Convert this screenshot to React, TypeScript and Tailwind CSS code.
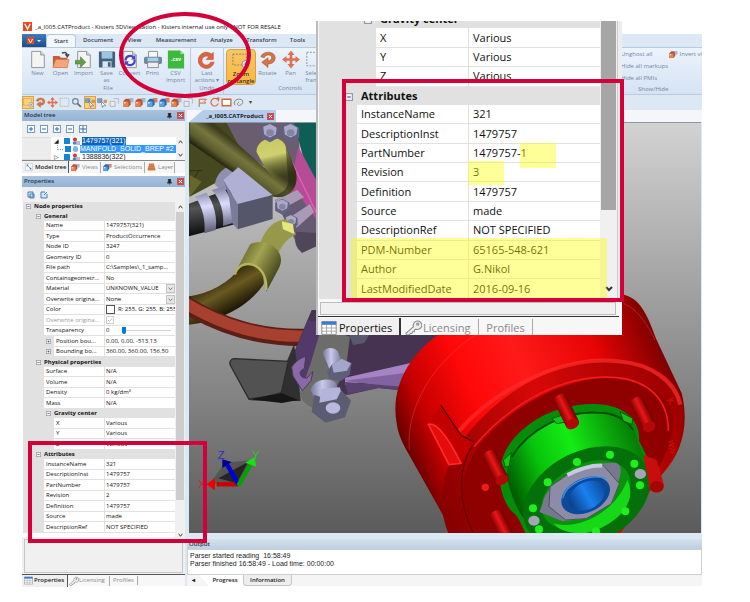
import type { ReactNode } from 'react'
import clsx from 'clsx'

type Row = {
  label: string
  value?: ReactNode
  kind?: 'head' | 'expand'
  depth: number
  muted?: boolean
}

const ribbonTabs = [
  { name: 'Document', width: 'w-[44px]' },
  { name: 'View', width: 'w-[29px]' },
  { name: 'Measurement', width: 'w-[54px]' },
  { name: 'Analyze', width: 'w-[37px]' },
  { name: 'Transform', width: 'w-[43px]' },
  { name: 'Tools', width: 'w-[29px]' },
]

const nodeRows: Row[] = [
  { label: 'Node properties', kind: 'head', depth: 0 },
  { label: 'General', kind: 'head', depth: 1 },
  { label: 'Name', value: '1479757(321)', depth: 1 },
  { label: 'Type', value: 'ProductOccurrence', depth: 1 },
  { label: 'Node ID', value: '3247', depth: 1 },
  { label: 'Geometry ID', value: '0', depth: 1 },
  { label: 'File path', value: 'C:\\Samples\\_1_samp...', depth: 1 },
  { label: 'Containsgeometr...', value: 'No', depth: 1 },
  { label: 'Material', value: <Picker label="Material" value="UNKNOWN_VALUE" />, depth: 1 },
  { label: 'Overwrite origina...', value: <Picker label="Overwrite original material" value="None" />, depth: 1 },
  {
    label: 'Color',
    value: (
      <span className="flex items-center gap-[3px]">
        <span className="h-[9px] w-[9px] shrink-0 border border-[#555] bg-white" />
        R: 255, G: 255, B: 255
      </span>
    ),
    depth: 1,
  },
  {
    label: 'Overwrite origina...',
    value: (
      <span className="relative block h-[8px] w-[8px]">
        <input type="checkbox" defaultChecked disabled aria-label="Overwrite original color" className="block h-[8px] w-[8px] appearance-none border border-[#ccc] bg-white" />
        <svg viewBox="0 0 8 8" className="absolute inset-0 h-[8px] w-[8px]">
          <path d="M2 4l1.500 1.500L6 2.500" fill="none" stroke="#bbb" />
        </svg>
      </span>
    ),
    depth: 1,
    muted: true,
  },
  {
    label: 'Transparency',
    value: (
      <span className="flex items-center gap-[13px]">
        0
        <input
          type="range"
          defaultValue={0}
          aria-label="Transparency"
          className="h-[8px] w-[49px] appearance-none bg-[linear-gradient(#d4d4d4,#d4d4d4)] bg-[length:100%_1px] bg-center bg-no-repeat [&::-webkit-slider-thumb]:h-[7px] [&::-webkit-slider-thumb]:w-[4px] [&::-webkit-slider-thumb]:appearance-none [&::-webkit-slider-thumb]:rounded-b-sm [&::-webkit-slider-thumb]:bg-[#0078d7]"
        />
      </span>
    ),
    depth: 1,
  },
  { label: 'Position bou...', value: '0.00, 0.00, -513.13', kind: 'expand', depth: 2 },
  { label: 'Bounding bo...', value: '360.00, 360.00, 156.50', kind: 'expand', depth: 2 },
  { label: 'Physical properties', kind: 'head', depth: 1 },
  { label: 'Surface', value: 'N/A', depth: 1 },
  { label: 'Volume', value: 'N/A', depth: 1 },
  { label: 'Density', value: '0 kg/dm³', depth: 1 },
  { label: 'Mass', value: 'N/A', depth: 1 },
  { label: 'Gravity center', kind: 'head', depth: 2 },
  { label: 'X', value: 'Various', depth: 2 },
  { label: 'Y', value: 'Various', depth: 2 },
  { label: 'Z', value: 'Various', depth: 2 },
  { label: 'Attributes', kind: 'head', depth: 1 },
  { label: 'InstanceName', value: '321', depth: 1 },
  { label: 'DescriptionInst', value: '1479757', depth: 1 },
  { label: 'PartNumber', value: '1479757', depth: 1 },
  { label: 'Revision', value: '2', depth: 1 },
  { label: 'Definition', value: '1479757', depth: 1 },
  { label: 'Source', value: 'made', depth: 1 },
  { label: 'DescriptionRef', value: 'NOT SPECIFIED', depth: 1 },
]

const detailRows: Row[] = [
  { label: 'Gravity center', kind: 'head', depth: 2 },
  { label: 'X', value: 'Various', depth: 2 },
  { label: 'Y', value: 'Various', depth: 2 },
  { label: 'Z', value: 'Various', depth: 2 },
  { label: 'Attributes', kind: 'head', depth: 1 },
  { label: 'InstanceName', value: '321', depth: 1 },
  { label: 'DescriptionInst', value: '1479757', depth: 1 },
  { label: 'PartNumber', value: '1479757-1', depth: 1 },
  { label: 'Revision', value: '3', depth: 1 },
  { label: 'Definition', value: '1479757', depth: 1 },
  { label: 'Source', value: 'made', depth: 1 },
  { label: 'DescriptionRef', value: 'NOT SPECIFIED', depth: 1 },
  { label: 'PDM-Number', value: '65165-548-621', depth: 1 },
  { label: 'Author', value: 'G.Nikol', depth: 1 },
  { label: 'LastModifiedDate', value: '2016-09-16', depth: 1 },
]

const smallIndent = ['border-l-[11px]', 'border-l-[21px]', 'border-l-[31px]']
const smallHeadPad = ['pl-[3px]', 'pl-[13px]', 'pl-[23px]']
const largeIndent = ['border-l-[19px]', 'border-l-[38px]', 'border-l-[57px]']
const largeHeadPad = ['pl-[7px]', 'pl-[26px]', 'pl-[45px]']

function Picker({ label, value }: { label: string; value: string }) {
  return (
    <span className="flex items-center">
      <select aria-label={label} className="h-[9px] min-w-0 flex-1 appearance-none bg-transparent p-0 leading-[9px]">
        <option>{value}</option>
      </select>
      <svg viewBox="0 0 9 9" className="h-[9px] w-[9px] shrink-0 border border-[#c4c4c4] bg-[#e6e6e6]">
        <path d="M2 3.500l2.500 2.500L7 3.500" fill="none" stroke="#555" />
      </svg>
    </span>
  )
}

function Expander({ plus, large }: { plus?: boolean; large?: boolean }) {
  return (
    <svg viewBox="0 0 7 7" className={large ? 'mr-[8px] inline h-[8px] w-[8px]' : 'mr-[3px] inline h-[5px] w-[5px]'}>
      <rect x=".5" y=".5" width="6" height="6" fill="#f4f4f4" stroke="#9a9a9a" />
      <path d={plus ? 'M2 3.500h3M3.500 2v3' : 'M2 3.500h3'} stroke="#3b5aa0" />
    </svg>
  )
}

function PropertyTable({ rows, large }: { rows: Row[]; large?: boolean }) {
  const indent = large ? largeIndent : smallIndent
  const headPad = large ? largeHeadPad : smallHeadPad
  return (
    <table
      className={clsx(
        'w-full table-fixed border-separate border-spacing-0 text-left text-[#111]',
        large ? '-mt-[11px] h-[289px] text-[11px] leading-[18px]' : 'h-[331px] text-[6px] leading-[9px]',
      )}
    >
      <colgroup>
        <col className={large ? 'w-[149px]' : 'w-[81px]'} />
        <col />
      </colgroup>
      <tbody>
        {rows.map((row, i) =>
          row.kind === 'head' ? (
            <tr key={i}>
              <th colSpan={2} className={clsx('truncate bg-[#e1e1e1] py-0 pr-0 font-bold', headPad[row.depth])}>
                <Expander large={large} />
                {row.label}
              </th>
            </tr>
          ) : (
            <tr key={i} className={row.muted ? 'text-[#9a9a9a]' : undefined}>
              <th className={clsx('border-b border-[#e1e1e1] bg-white p-0 font-normal whitespace-nowrap', indent[row.depth])}>
                {row.kind === 'expand' && (
                  <span className="-ml-[8px]">
                    <Expander plus />
                  </span>
                )}
                <span className={row.kind === 'expand' ? 'pl-[2px]' : large ? 'pl-[4px]' : 'pl-[2px]'}>{row.label}</span>
              </th>
              <td
                className={clsx(
                  'overflow-hidden border-b border-l border-[#e1e1e1] bg-white py-0 pr-0 whitespace-nowrap',
                  large ? 'pl-[4px]' : 'pl-[1px]',
                )}
              >
                {row.value}
              </td>
            </tr>
          ),
        )}
      </tbody>
    </table>
  )
}

/* ---------- icons ---------- */

function Sheet({ children }: { children?: ReactNode }) {
  return (
    <>
      <path d="M3 1h10l4 4v14H3z" fill="#f4f4f2" stroke="#8c8c8c" />
      <path d="M13 1v4h4" fill="#ddd" stroke="#8c8c8c" />
      {children}
    </>
  )
}

const icons: Record<string, ReactNode> = {
  new: <Sheet />,
  open: (
    <>
      <path d="M1 6h7l2 2h7v11H1z" fill="#c45f38" />
      <path d="M4 10h15l-2 9H1z" fill="#f3a67c" stroke="#d0683f" strokeWidth=".6" />
      <path d="M11 3c4-2 6 0 6 3m-2-2l2 3 2-3" fill="none" stroke="#444" strokeWidth="1.500" />
    </>
  ),
  import: (
    <Sheet>
      <path d="M0 11h6V7l6 6-6 6v-4H0z" fill="#5fa04b" stroke="#3d7a31" strokeWidth=".6" />
    </Sheet>
  ),
  save: (
    <>
      <path d="M1 1h17l1 1v17H1z" fill="#41617f" />
      <path d="M4 1h12v8H4z" fill="#9fc4e0" />
      <path d="M5 12h10v7H5z" fill="#dfe6ec" />
      <path d="M11 13h3v5h-3z" fill="#41617f" />
    </>
  ),
  convert: (
    <Sheet>
      <path d="M5 11a5 5 0 0 1 9-3M15 10a5 5 0 0 1-9 4" fill="none" stroke="#4545cf" strokeWidth="2.400" />
      <path d="M16 5v5h-5zM4 17v-5h5z" fill="#4545cf" />
    </Sheet>
  ),
  print: (
    <>
      <path d="M5 1h10v8H5z" fill="#f7f7f7" stroke="#888" />
      <rect x="0" y="7" width="20" height="8" rx="2" fill="#71879b" />
      <path d="M4 8h12v4H4z" fill="#a5d0ef" />
      <path d="M4 13h12v6H4z" fill="#eee" stroke="#888" />
    </>
  ),
  csv: (
    <>
      <path d="M1 0h14l4 4v16H1z" fill="#3fb83e" />
      <path d="M15 0v4h4z" fill="#a7e0a4" />
      <text x="10" y="12" textAnchor="middle" fontSize="6" fontWeight="bold" fill="#fff">.csv</text>
    </>
  ),
  last: <path d="M17 2v8H9l3-3a5 5 0 1 0 2 6h4A9 9 0 1 1 15 4z" fill="#df6440" stroke="#b64829" strokeWidth=".6" />,
  zoomRect: (
    <>
      <path d="M1 3h15v12H1z" fill="none" stroke="#777" strokeDasharray="2 1.500" />
      <circle cx="15" cy="14" r="4" fill="#e6e6e6" stroke="#888" />
      <path d="M13 14h4M15 12v4" stroke="#777" />
    </>
  ),
  rotate: <path d="M2 7C4 0 18 0 18 8c0 5-4 7-8 7v4l-7-6 7-5v3c3 0 4-1 4-3 0-4-7-4-8 0z" fill="#d2764a" stroke="#a8522c" strokeWidth=".6" />,
  pan: <path d="M10 0l4 5h-2.500v3.500H15V6l5 4-5 4v-2.500h-3.500V15H14l-4 5-4-5h2.500v-3.500H5V14l-5-4 5-4v2.500h3.500V5H6z" fill="#dd7253" />,
  select: <path d="M2 2h16v15H2z" fill="none" stroke="#888" strokeDasharray="2 1.500" />,
  cubes: (
    <>
      <path d="M1 7l4-4h9v10l-4 5H1z" fill="#b9532c" />
      <path d="M1 8h9v10H1z" fill="#e58055" />
      <path d="M2 9h3v3H2z" fill="#f9d6c2" />
      <path d="M11 2h8v8h-5V5h-3z" fill="#9bbbdb" />
    </>
  ),
  blueCubes: (
    <>
      <path d="M1 7l4-4h9v10l-4 5H1z" fill="#2a6bb0" />
      <path d="M1 8h9v10H1z" fill="#5ea2dc" />
      <path d="M2 9h3v3H2z" fill="#d5eafa" />
      <path d="M11 2h8v8h-5V5h-3z" fill="#df7c55" />
    </>
  ),
  pick: (
    <>
      <path d="M1 3h8v7H1z" fill="#7aa5d2" stroke="#5a7899" />
      <path d="M12 5h6v6h-6z" fill="#dd8e61" />
      <path d="M7 7l9 9h-5l-1 3z" fill="#fff" stroke="#555" />
    </>
  ),
  ghost: <path d="M2 8h9v9H2zM8 3h9v9" fill="#ececec" stroke="#a7adb5" strokeWidth="1.500" />,
  magnify: (
    <>
      <circle cx="8" cy="8" r="5" fill="#d8ebfa" stroke="#687f96" strokeWidth="2" />
      <path d="M12 12l6 6" stroke="#7d6555" strokeWidth="3" />
    </>
  ),
  flag: <path d="M4 18V4h13l-4 4 3 3H5" fill="#f5e4da" stroke="#b5714c" strokeWidth="1.800" />,
  circle: <path d="M16 5a7 7 0 1 0 1 7M12 3l6-1-1 6" fill="none" stroke="#d36e43" strokeWidth="2.200" />,
  rect: <path d="M2 4h16v12H2z" fill="#fff" stroke="#d0683f" strokeWidth="2.500" />,
  cloud: <path d="M4 15c-5-5 1-12 8-11 8 0 7 9 1 11-5 2-7-4-2-6" fill="none" stroke="#8c8178" strokeWidth="1.800" />,
  grid: (
    <>
      <path d="M1 2h18v16H1z" fill="#fff" stroke="#777" />
      <path d="M1 2h18v4H1z" fill="#3979d8" />
      <path d="M1 10h18M1 14h18M7 6v12M13 6v12" stroke="#999" />
    </>
  ),
  key: <path d="M1 17l9-8a5 5 0 1 1 3 3l-2 1v2H9l-1 2H6l-1 2H2zM14 5h2v2h-2z" fill="#eee" stroke="#8b8b8b" strokeWidth="1.300" />,
  tree: (
    <>
      <path d="M1 1h18v18H1z" fill="#fff" stroke="#8aa5c6" />
      <path d="M4 4h4v4H4zM12 12h4v4h-4z" fill="#3b78c6" />
      <path d="M7 7l7 7" stroke="#3b78c6" strokeWidth="1.500" />
    </>
  ),
  layers: <path d="M4 2h12v4l3 9v3H1v-3l3-9zM3 9h14M2 14h16" fill="#dd8250" stroke="#b9592e" />,
}

function Icon({ name, className }: { name: string; className?: string }) {
  return (
    <svg viewBox="0 0 20 20" className={clsx('shrink-0', className)}>
      {icons[name]}
    </svg>
  )
}

const fileButtons = [
  { icon: 'new', lines: ['New'] },
  { icon: 'open', lines: ['Open'] },
  { icon: 'import', lines: ['Import'] },
  { icon: 'save', lines: ['Save', 'as'] },
  { icon: 'convert', lines: ['Convert'] },
  { icon: 'print', lines: ['Print'] },
  { icon: 'csv', lines: ['CSV', 'Import'] },
]

const quickTools = [
  'zoomRect', 'rotate', 'pan', 'select', 'magnify', 'pick', 'pick', 'ghost', 'cubes', 'cubes',
  'blueCubes', 'blueCubes', 'cubes', 'ghost', 'flag', 'circle', 'rect', 'cloud',
]

function RibbonButton({ icon, lines, width = 'w-[23px]', active }: { icon: string; lines: string[]; width?: string; active?: boolean }) {
  return (
    <button
      className={clsx(
        'flex h-[36px] flex-col items-center pt-[1px] leading-[7px] whitespace-nowrap',
        width,
        active
          ? 'rounded-sm border border-[#d9a13e] bg-gradient-to-b from-[#f6c764] to-[#fdb73a] font-semibold text-[#333]'
          : 'text-[#75859d]',
      )}
    >
      <Icon name={icon} className="mb-px h-[19px] w-[18px]" />
      {lines.map((line) => (
        <span key={line}>{line}</span>
      ))}
    </button>
  )
}

function Ribbon() {
  return (
    <header className="text-[6px]">
      <div className="flex h-[14px] items-center gap-[3px] pb-[1px] pl-px leading-[10px] text-[#111]">
        <svg viewBox="0 0 10 10" className="h-[9px] w-[9px]">
          <path d="M0 0h10v10H0z" fill="#e8481c" />
          <path d="M2 2l3 6 3-6" fill="none" stroke="#fff" strokeWidth="1.500" />
        </svg>
        <h1>_a_I005.CATProduct - Kisters 3DViewStation - Kisters internal use only - NOT FOR RESALE</h1>
      </div>
      <nav className="flex h-[13px] items-stretch bg-[#dde8f5] text-center leading-[13px] font-semibold text-[#333e50]">
        <button aria-label="Application menu" className="flex w-[24px] items-center justify-center gap-[3px] bg-gradient-to-b from-[#3f7cbe] to-[#1c4d8d]">
          <svg viewBox="0 0 14 8" className="h-[8px] w-[14px]">
            <path d="M0 0h7v7H0z" fill="#e8481c" />
            <path d="M1.500 2l2 4 2-4" fill="none" stroke="#fff" />
            <path d="M10 3h4l-2 2z" fill="#fff" />
          </svg>
        </button>
        <button className="w-[30px] rounded-t-sm border border-b-0 border-[#b5c7de] bg-[#f2f7fd] leading-[12px]">Start</button>
        {ribbonTabs.map((tab) => (
          <button key={tab.name} className={tab.width}>
            {tab.name}
          </button>
        ))}
      </nav>
      <div className="flex h-[48px] items-stretch border-y border-[#b9c9de] bg-gradient-to-b from-[#ecf3fc] to-[#d5e3f4] leading-[7px] text-[#75859d]">
        <section className="w-[169px] border-r border-[#b9c9de] pt-px pl-[4px]">
          <div className="flex">
            {fileButtons.map((b) => (
              <RibbonButton key={b.icon} {...b} />
            ))}
          </div>
          <p className="text-center">File</p>
        </section>
        <section className="w-[33px] border-r border-[#b9c9de] pt-px">
          <RibbonButton icon="last" lines={['Last', 'actions ▾']} width="w-[32px]" />
          <p className="text-center">Undo</p>
        </section>
        <section className="w-[130px] pt-px pl-[2px]">
          <div className="flex">
            <RibbonButton icon="zoomRect" lines={['Zoom', 'rectangle']} width="w-[30px]" active />
            <RibbonButton icon="rotate" lines={['Rotate']} />
            <RibbonButton icon="pan" lines={['Pan']} />
            <RibbonButton icon="select" lines={['Select', 'frame']} />
          </div>
          <p className="text-center">Controls</p>
        </section>
        <section className="ml-auto flex w-[82px] flex-col gap-[5px] pt-[2px] pl-[1px] whitespace-nowrap">
          <div className="flex h-[8px] items-center">
            <button className="w-[51px] text-left">Unghost all</button>
            <button className="flex items-center gap-[2px]">
              <Icon name="cubes" className="h-[9px] w-[9px]" />
              Invert vi
            </button>
          </div>
          <button className="text-left">Hide all markups</button>
          <button className="text-left">Hide all PMIs</button>
          <p className="-mt-px pl-[17px]">Show/Hide</p>
        </section>
      </div>
      <div className="flex h-[15px] items-center bg-[#dde8f5]" role="toolbar" aria-label="Quick tools">
        {quickTools.map((tool, i) => (
          <button
            key={i}
            aria-label={tool}
            className={clsx(
              'flex h-[13px] w-[12px] items-center justify-center',
              (i === 0 || i === 5) && 'border border-[#dba23e] bg-[#ffd176]',
              (i === 4 || i === 7 || i === 13) && 'mr-[2px]',
            )}
          >
            <Icon name={tool} className="h-[11px] w-[11px]" />
          </button>
        ))}
        <span className="pl-[5px] text-[#444]">▾</span>
      </div>
    </header>
  )
}

function PanelHeader({ title }: { title: string }) {
  return (
    <div className="flex h-[11px] items-center justify-between bg-gradient-to-b from-[#a9c3df] to-[#94b4d5] pr-px pl-[2px] leading-[11px] font-semibold text-[#273447]">
      <h2>{title}</h2>
      <div className="flex items-center gap-[5px]">
        <svg viewBox="0 0 6 7" className="h-[6px] w-[5px]">
          <path d="M1.500 0h3v4h1v1h-5V4h1zM3 5v2" fill="#222" stroke="#222" strokeWidth=".5" />
        </svg>
        <CloseButton />
      </div>
    </div>
  )
}

function CloseButton() {
  return (
    <button aria-label="Close" className="flex h-[7px] w-[7px] items-center justify-center bg-[#c94f4f]">
      <svg viewBox="0 0 7 7" className="h-[7px] w-[7px]">
        <path d="M2 2l3 3M5 2L2 5" stroke="#fff" />
      </svg>
    </button>
  )
}

function ModelTree() {
  return (
    <section className="bg-[#f0f0f0]">
      <PanelHeader title="Model tree" />
      <div className="flex h-[16px] items-center gap-[5px] pl-[5px]">
        {['M2 4h4M4 2v4', 'M2 4h4', 'M2 4h4M4 2v4', 'M2 4h4', 'M1 4h6M4 1v6'].map((d, i) => (
          <button key={i} aria-label="Expand or collapse" className="h-[8px] w-[8px]">
            <svg viewBox="0 0 8 8" className="h-[8px] w-[8px]">
              <rect x=".5" y=".5" width="7" height="7" fill="#fff" stroke="#6f9ac2" />
              <path d={d} stroke="#2f6da8" />
            </svg>
          </button>
        ))}
      </div>
      <div className="flex h-[24px] overflow-hidden border-b border-[#888] font-['Liberation_Sans',sans-serif] text-[7px] leading-[8px] text-[#222]">
        <div className="w-[29px] border-y border-[#ddd] bg-[#ececec]" />
        <ul className="min-w-0 flex-1 bg-white pl-[3px]">
          <li className="flex items-center gap-[2px] whitespace-nowrap">
            <span className="w-[6px] text-[6px]">◢</span>
            <TreeMarks />
            <span className="bg-[#0b64ba] text-white">1479757(321)</span>
          </li>
          <li className="flex items-center gap-[2px] pl-[3px] whitespace-nowrap">
            <span className="-mt-[4px] h-[5px] w-[6px] border-b border-l border-dotted border-[#999]" />
            <span className="h-[6px] w-[6px] bg-[#1384d8]" />
            <span className="h-[6px] w-[5px] rounded-full bg-[#7fb2ef]" />
            <span className="flex-1 bg-[#3399ff] text-white">MANIFOLD_SOLID_BREP #2</span>
          </li>
          <li className="flex items-center gap-[2px] whitespace-nowrap">
            <span className="w-[6px] text-[6px]">▷</span>
            <TreeMarks />
            <span>1388836(322)</span>
          </li>
        </ul>
        <div className="flex w-[9px] flex-col items-center justify-between bg-[#f0f0f0] py-[3px]">
          <Chevron up />
          <Chevron />
        </div>
      </div>
      <nav className="flex h-[12px] items-center bg-[#f7f7f7] leading-[11px] text-[#888]">
        <button className="flex h-[12px] w-[47px] items-center gap-[2px] border-r border-[#555] bg-[#f0f0f0] pl-[3px] font-semibold text-[#222]">
          <Icon name="tree" className="h-[8px] w-[8px]" />
          Model tree
        </button>
        <button className="flex w-[32px] items-center gap-[2px] border-r border-[#aaa] pl-[2px]">
          <Icon name="cubes" className="h-[9px] w-[9px]" />
          Views
        </button>
        <button className="flex w-[44px] items-center gap-[2px] border-r border-[#aaa] pl-[2px]">
          <Icon name="blueCubes" className="h-[9px] w-[9px]" />
          Selections
        </button>
        <button className="flex w-[30px] items-center gap-[2px] border-r border-[#aaa] pl-[2px]">
          <Icon name="layers" className="h-[8px] w-[9px]" />
          Layer
        </button>
      </nav>
    </section>
  )
}

function TreeMarks() {
  return (
    <>
      <span className="ml-[2px] h-[6px] w-[6px] bg-[#1384d8]" />
      <svg viewBox="0 0 8 8" className="h-[8px] w-[8px]">
        <circle cx="3" cy="2.500" r="2" fill="#d33" />
        <circle cx="2.500" cy="6" r="1.800" fill="#4a7fd8" />
        <path d="M4 4h4v4H4z" fill="#b9b9c6" />
      </svg>
    </>
  )
}

function Chevron({ up }: { up?: boolean }) {
  return (
    <svg viewBox="0 0 8 6" className="h-[4px] w-[5px]">
      <path d={up ? 'M1 5l3-4 3 4' : 'M1 1l3 4 3-4'} fill="none" stroke="#333" strokeWidth="1.500" />
    </svg>
  )
}

function PropertiesPanel() {
  return (
    <section className="mt-[3px] flex flex-1 flex-col bg-[#f0f0f0]">
      <PanelHeader title="Properties" />
      <div className="flex h-[15px] items-center gap-[5px] pl-[5px]">
        {['M1 1h5v5H1zM3 3h4v4H3z', 'M5 1H1v6h6V3M4 4l3-3'].map((d) => (
          <button key={d} aria-label="Copy properties" className="h-[8px] w-[8px]">
            <svg viewBox="0 0 8 8" className="h-[8px] w-[8px]">
              <path d={d} fill="#d6e8f7" stroke="#3f7fb6" />
            </svg>
          </button>
        ))}
      </div>
      <div className="flex h-[335px] overflow-hidden bg-white pl-px">
        <div className="min-w-0 flex-1">
          <PropertyTable rows={nodeRows} />
        </div>
        <div className="flex w-[10px] flex-col items-center bg-[#f0f0f0] pt-[3px]">
          <Chevron up />
          <div className="mt-[3px] mb-auto h-[288px] w-[8px] bg-[#cdcdcd]" />
          <Chevron />
        </div>
      </div>
      <div className="mx-[2px] mt-[2px] min-h-[32px] flex-1 border border-[#c6c6c6]" />
      <nav className="mt-px flex h-[12px] items-center border-t border-[#555] bg-[#f7f7f7] text-[#888]">
        <button className="flex h-[12px] w-[46px] items-center gap-px border-r border-[#555] bg-[#f0f0f0] pl-[2px] font-semibold text-[#222]">
          <Icon name="grid" className="h-[9px] w-[9px]" />
          Properties
        </button>
        <button className="flex w-[42px] items-center border-r border-[#aaa] pl-px">
          <Icon name="key" className="h-[10px] w-[10px]" />
          Licensing
        </button>
        <button className="w-[28px] border-r border-[#aaa]">Profiles</button>
      </nav>
    </section>
  )
}

/* ---------- 3D scene ---------- */

function Pin({ x, y, length = 85 }: { x: number; y: number; length?: number }) {
  return (
    <g transform={`translate(${x} ${y}) rotate(-26)`}>
      <path d={`M-21 0v${length}a21 15 0 0 0 42 0V0a21 11 0 0 0-42 0z`} fill="url(#pin)" />
      <ellipse cy={length} rx="20" ry="14" fill="#b30808" />
    </g>
  )
}

function HexBolt({ x, y, r }: { x: number; y: number; r: number }) {
  return (
    <g transform={`translate(${x} ${y}) scale(${r})`}>
      <path d="M-.9-.5L0-1l.9.500v1L0 1l-.9-.500z" fill="#626280" />
      <path d="M-.7-.6L0-.9l.7.400-.1.700-.6.300-.6-.300z" fill="#a9a9cc" />
      <ellipse rx=".4" ry=".35" fill="#85859f" />
    </g>
  )
}

function Scene() {
  return (
    <svg viewBox="189 123 513 410" preserveAspectRatio="xMinYMin slice" className="absolute inset-0 h-full w-full" role="img" aria-label="3D model">
      <defs>
        <linearGradient id="sky" x1="0" y1="0" x2="0" y2="1">
          <stop offset="0" stopColor="#d2d2d2" />
          <stop offset="1" stopColor="#5b5b5b" />
        </linearGradient>
        <linearGradient id="drum" gradientUnits="userSpaceOnUse" x1="60" y1="470" x2="860" y2="130">
          <stop offset="0" stopColor="#5c0000" />
          <stop offset=".12" stopColor="#c30000" />
          <stop offset=".3" stopColor="#ff0808" />
          <stop offset=".5" stopColor="#ff1a1a" />
          <stop offset=".75" stopColor="#e80404" />
          <stop offset="1" stopColor="#6b0000" />
        </linearGradient>
        <linearGradient id="rim" gradientUnits="userSpaceOnUse" x1="200" y1="640" x2="900" y2="300">
          <stop offset="0" stopColor="#8a0000" />
          <stop offset=".5" stopColor="#d80808" />
          <stop offset="1" stopColor="#9a0000" />
        </linearGradient>
        <linearGradient id="hub" x1="0" y1=".6" x2="1" y2=".3">
          <stop offset="0" stopColor="#005c00" />
          <stop offset=".25" stopColor="#08c40c" />
          <stop offset=".5" stopColor="#14ec14" />
          <stop offset="1" stopColor="#026a02" />
        </linearGradient>
        <linearGradient id="pin">
          <stop offset="0" stopColor="#7c0000" />
          <stop offset=".5" stopColor="#ee1616" />
          <stop offset="1" stopColor="#6d0000" />
        </linearGradient>
        <linearGradient id="bore">
          <stop offset="0" stopColor="#0a3f86" />
          <stop offset=".5" stopColor="#1a80f0" />
          <stop offset="1" stopColor="#0b4c9c" />
        </linearGradient>
        <linearGradient id="steel">
          <stop offset="0" stopColor="#77779a" />
          <stop offset=".4" stopColor="#c9c9ee" />
          <stop offset="1" stopColor="#6c6c88" />
        </linearGradient>
        <linearGradient id="sleeve" gradientUnits="userSpaceOnUse" x1="160" y1="460" x2="280" y2="530">
          <stop offset="0" stopColor="#63632a" />
          <stop offset=".4" stopColor="#a3a352" />
          <stop offset="1" stopColor="#3d3d18" />
        </linearGradient>
        <linearGradient id="elbow" gradientUnits="userSpaceOnUse" x1="160" y1="134" x2="112" y2="200">
          <stop offset="0" stopColor="#3c3d1c" />
          <stop offset=".35" stopColor="#75763d" />
          <stop offset=".7" stopColor="#5b5c2d" />
          <stop offset="1" stopColor="#1b1c0b" />
        </linearGradient>
        <linearGradient id="elbowTop" gradientUnits="userSpaceOnUse" x1="250" y1="120" x2="275" y2="235">
          <stop offset="0" stopColor="#c9ca62" />
          <stop offset=".4" stopColor="#cfd070" />
          <stop offset="1" stopColor="#75763d" stopOpacity="0" />
        </linearGradient>
        <linearGradient id="shaft" gradientUnits="userSpaceOnUse" x1="80" y1="280" x2="100" y2="400">
          <stop offset="0" stopColor="#222" />
          <stop offset=".3" stopColor="#555" />
          <stop offset="1" stopColor="#080808" />
        </linearGradient>
        <linearGradient id="ring" gradientUnits="userSpaceOnUse" x1="80" y1="270" x2="100" y2="400">
          <stop offset="0" stopColor="#8888a8" />
          <stop offset=".35" stopColor="#dcdcff" />
          <stop offset="1" stopColor="#505068" />
        </linearGradient>
        <linearGradient id="brown" gradientUnits="userSpaceOnUse" x1="70" y1="560" x2="120" y2="650">
          <stop offset="0" stopColor="#3d3210" />
          <stop offset=".35" stopColor="#6a5920" />
          <stop offset="1" stopColor="#171204" />
        </linearGradient>
      </defs>
      <rect x="189" y="123" width="513" height="410" fill="url(#sky)" />

      {/* hoses, clamp and connector block */}
      <g transform="translate(185 100) scale(.33333)">
        <path d="M0 60h200v100l-75 60-35 30-76 40z" fill="#46481f" />
        <path d="M14 212h38M14 260l28-50" stroke="#24260e" strokeWidth="2" />
        <path d="M14 290v-65l36 20z" fill="#66682b" />
        <path d="M120 60h220l8 190-70-20-110-80z" fill="#6b5d70" />
        <path d="M325 60h80v190h-30z" fill="#0f5e56" />
        <path d="M340 140l75 140v110h-20l-85-110z" fill="#b54c95" />
        <path d="M320 185l75 155" stroke="#ea5cb9" strokeWidth="4" />
        <path d="M90 255c0-30 30-60 62-60l20 30-52 55z" fill="#8f8fae" />
        <path d="M270 300l65-25 60 85v75l-45 25-40-80z" fill="#665a72" />
        <path d="M272 300l65-30 20 22-75 40zM315 352l60-40 12 25-52 46z" fill="#a99bb6" />
        <path d="M14 60H78L240 205l-26-50C216 108 288 100 302 138l30 75C346 272 300 302 258 288 220 272 120 200 14 128z" fill="url(#elbow)" />
        <path d="M214 155C216 108 288 100 302 138l26 70-50 40-38-44z" fill="url(#elbowTop)" />
        <path d="M302 138l30 75C346 272 300 302 258 288c40-5 60-30 50-70z" fill="#25260f" opacity=".5" />
        <HexBolt x={255} y={98} r={29} />
        <HexBolt x={317} y={98} r={29} />
        <path d="M0 316l138-52 17 107L0 412z" fill="url(#shaft)" />
        <path d="M30 290l34-12c24 30 34 80 28 112l-34 10c4-35-4-80-28-110zM80 270l34-10c25 30 36 75 32 108l-32 10c4-35-6-80-34-108z" fill="url(#ring)" />
        <path d="M115 240l45-38 103 83-105 27z" fill="#b0b0d4" />
        <path d="M115 240l43 72v76l-16-18-10-80z" fill="#7a7a9b" />
        <path d="M158 312l105-27v72l-105 31z" fill="#56566b" />
        <HexBolt x={292} y={320} r={24} />
        <HexBolt x={318} y={365} r={22} />
        <path d="M335 395c-10 20-5 55 20 62l40-18v-40z" fill="#4f465a" />
        <path d="M225 430c15-40 40-70 80-72l28 45c-22 10-42 30-55 62z" fill="#98984a" />
        <path d="M290 364l34 8 4 30-34-14z" fill="#e6e67e" />
        <path d="M196 432c40-18 92 8 92 48 0 10-4 20-8 28l-36 67c4-60-45-85-96-54z" fill="url(#sleeve)" />
        <path d="M0 590c60-5 130-35 172-95 40-10 68 20 64 58C190 620 100 668 0 675z" fill="url(#brown)" />
        <path d="M150 524c8-50 98-46 94 46" fill="none" stroke="#b5b55e" strokeWidth="7" />
        <path d="M-10 607c120 75 240 110 380 105" fill="none" stroke="#5c1f16" strokeWidth="52" />
        <path d="M-10 603c120 75 240 110 380 105" fill="none" stroke="#a84030" strokeWidth="34" />
      </g>

      {/* bracket */}
      <g transform="translate(185 330) scale(.33333)">
        <path d="M330 60L380-60h470L660 182l-80-8-90 20-130 0-45-80z" fill="#453351" />
        <path d="M480 143L700 94v36l-220 34z" fill="#a583c5" />
        <path d="M480 152l220-28v52l-110-8z" fill="#8262a0" />
        <path d="M480 156l220 18-60 6-60-6-92 18z" fill="#594270" />
        <path d="M368-30l50 10-50 210-60-70z" fill="#52396a" />
        <path d="M305 95l22-52 10 60 10 110-62 0-90-2 95-30z" fill="#303030" />
        <path d="M148 86l162 8-20 90c0 10-90 22-98 24L136 106c-4-10 2-20 12-20z" fill="#525252" stroke="#2b2b2b" strokeWidth="4" />
        <path d="M195 208l95-18 50 20-50 9z" fill="#161616" />
        <path d="M410-10l85 30-12 90-60 130c-40 2-75-20-78-50l32-90z" fill="#6c6c6a" />
        <path d="M320 112c10-20 35-32 42-32l-4 36c-20 5-15 30 8 28l18-20-6 28-26 30-28-44z" fill="#8b68a6" stroke="#4e3761" strokeWidth="3" />
        <path d="M490 5l68 0-20 34-34 6z" fill="#59596e" />
        <path d="M413 68c8-18 35-18 45-4l18 44-38 20z" fill="url(#steel)" />
        <path d="M440 104l30-18 30 14-6 34-28 20-32-8-8-20z" fill="#5e5e78" />
        <path d="M440 104l30-18 28 14-12 22-40 6z" fill="#a6a6cc" />
        <path d="M376 180c8-30 55-42 76-22l15 40-58 40z" fill="url(#steel)" />
        <path d="M405 200l60-24 33 36-18 50-58 16-42-32 8-52z" fill="#5b5b72" />
        <path d="M409 176l56-4 2 12-12 24-52 10z" fill="#b4b4da" />
        <ellipse cx="444" cy="234" rx="22" ry="17" fill="#b9b9df" />
        {/* axis triad */}
        <path d="M75 460l45-62 82-8-45 76z" fill="#555" />
        <path d="M100 445l90-50-35 65z" fill="#252525" />
        <path d="M160 463H95" stroke="#c80000" strokeWidth="13" />
        <path d="M64 463l26-18v36z" fill="#ee0000" />
        <path d="M160 463l-34-60" stroke="#0000d8" strokeWidth="13" />
        <path d="M112 388l28 8-28 18z" fill="#000090" />
        <path d="M160 467l36-62" stroke="#00a400" strokeWidth="13" />
        <path d="M208 382l6 28-34-12z" fill="#11e411" />
        <g fontFamily="Liberation Sans, sans-serif" fontSize="34">
          <text x="98" y="388" fill="#2d2dcc">Z</text>
          <text x="201" y="386" fill="#25c825">Y</text>
          <text x="40" y="475" fill="#cc2b2b">X</text>
        </g>
      </g>

      {/* brake drum and hub */}
      <g transform="translate(380 290) scale(.33333)">
        <path d="M170 137C90 195 30 290 50 400c5 45 30 80 60 135l90 160c20 40 60 60 100 80l380-40L845 555C915 480 925 390 905 310L830 150C810 100 790 30 735 15L400-40z" fill="url(#drum)" />
        <path d="M88 480C75 330 190 180 330 110M730 40c50 20 80 80 95 110" fill="none" stroke="#ff4a4a" strokeWidth="2" opacity=".6" />
        <path d="M205 730C160 620 195 500 290 400 400 280 570 195 720 208c120 10 200 80 190 180-5 70-35 130-75 180L700 760H230z" fill="url(#rim)" />
        <path d="M235 425C350 290 560 195 715 214c100 8 170 60 186 130" fill="none" stroke="#ff2c2c" strokeWidth="12" opacity=".7" />
        <path d="M290 760C225 660 235 530 320 440 420 330 580 258 710 263c130 8 205 90 150 220-20 50-50 90-90 130L640 760z" fill="#8f0000" />
        <path d="M282 470C400 330 560 250 710 263c90 8 155 60 155 160" fill="none" stroke="#f31b1b" strokeWidth="5" />
        <path d="M282 460c-50 70-50 180 0 270" fill="none" stroke="#5a0000" strokeWidth="3" />
        <path d="M182 345l62 92 36 18-36 65-40 3-60-120z" fill="#c20000" />
        <path d="M145 403c20-5 50 20 98 117l-36 4z" fill="#e50c0c" stroke="#ff2a2a" strokeWidth="5" />
        <path d="M182 345l62 92 36 18" fill="none" stroke="#500000" strokeWidth="4" />
        <text x="868" y="335" fontSize="28" fill="#d41010" transform="rotate(60 868 325)">K</text>
        <text x="878" y="465" fontSize="22" fill="#d41010" transform="rotate(80 878 450)">WW</text>
        <path d="M362 530c10-90 130-190 280-188 90 0 140 50 135 110l30 60c20 100-60 200-150 250H460c-30-30-30-60-55-90-25-15-55-80-43-142z" fill="#058c08" />
        <path d="M380 560c0-90 120-200 280-190 60 0 110 40 115 90l35 85-370 150c-30-30-50-90-60-135z" fill="url(#hub)" />
        <path d="M395 500c50-80 160-140 260-132 60 0 90 30 105 52" fill="none" stroke="#034c04" strokeWidth="6" />
        <path d="M516 385l40-12 20 20-46 8zM720 365l38 20-2 18-26-10zM370 510l24-22-6 40-12 4z" fill="#14c414" stroke="#045a04" strokeWidth="3" />
        <ellipse cx="620" cy="622" rx="202" ry="138" transform="rotate(-27 620 622)" fill="#04700a" />
        <ellipse cx="618" cy="615" rx="142" ry="92" transform="rotate(-27 618 615)" fill="#0a920d" />
        <path d="M520 700c60 20 180-20 222-130 40 80-60 150-130 160-50 0-75-10-92-30z" fill="#17d817" />
        <path d="M488 640c10-60 110-125 220-122 20 10 15 30 10 48l-20 60-90 60-60 8-70-28z" fill="#77778f" />
        <path d="M510 590l70-48 90-16 48 55-24 60-75 45-62 4-50-40z" fill="#8c8ca6" stroke="#50505f" strokeWidth="3" />
        <path d="M562 555c30-15 70-30 105-28" fill="none" stroke="#c9c9e4" strokeWidth="12" />
        <ellipse cx="617" cy="616" rx="77" ry="51" transform="rotate(-25 617 616)" fill="#0b499b" />
        <ellipse cx="621" cy="617" rx="58" ry="40" transform="rotate(-30 621 617)" fill="url(#bore)" />
        <path d="M548 625c10-45 80-75 130-60" fill="none" stroke="#3a90f2" strokeWidth="4" />
        {[[591, 516], [690, 494], [763, 521], [780, 586], [736, 664], [648, 724], [503, 577], [459, 655], [477, 718]].map(([x, y]) => (
          <circle key={x} cx={x} cy={y} r="12" fill="#1df01d" />
        ))}
        <ellipse cx="781" cy="552" rx="17" ry="15" fill="#a5a5b8" />
        <ellipse cx="462" cy="692" rx="17" ry="15" fill="#a5a5b8" />
        <circle cx="316" cy="592" r="11" fill="#f01c1c" />
        <Pin x={540} y={325} />
        <Pin x={770} y={333} />
        <Pin x={328} y={493} />
        <Pin x={348} y={673} />
        <path d="M790 494l40 16 22 75c0 25-30 30-42 12z" fill="#c80d0d" />
        <ellipse cx="830" cy="590" rx="20" ry="17" fill="#a40505" />
      </g>
    </svg>
  )
}

function Workspace() {
  return (
    <main className="flex min-w-0 flex-1 flex-col bg-[#dde8f5]">
      <div className="flex h-[12px] items-end bg-[#f4f6f9] pl-[2px]">
        <div className="flex h-[12px] w-[87px] items-center gap-[3px] bg-[#b5cdeb] pl-[17px] font-bold text-[#222] [clip-path:polygon(14px_0,100%_0,100%_100%,0_100%)]">
          <span>_a_I005.CATProduct</span>
          <CloseButton />
        </div>
      </div>
      <div className="relative mr-px ml-[2px] min-h-[411px] flex-1 overflow-hidden border-t border-[#8c97a5]">
        <Scene />
      </div>
      <section className="mt-[6px] bg-[#f5f5f5] text-[#222]">
        <h2 className="h-[10px] bg-gradient-to-b from-[#d4e1ee] to-[#bccfe1] pl-[2px] leading-[10px] font-semibold text-[#273447]">Output</h2>
        <div className="h-[26px] border border-[#d0d0d0] bg-white pt-[2px] pl-[2px] font-['Liberation_Sans',sans-serif] text-[7px] leading-[8px]">
          <p>Parser started reading&nbsp; 16:58:49</p>
          <p>Parser finished 16:58:49 - Load time: 00:00:00</p>
        </div>
        <nav className="flex h-[11px] font-semibold">
          <span className="w-[12px] text-center leading-[11px]">◂</span>
          <button className="w-[44px] bg-white pl-[8px] leading-[11px] [clip-path:polygon(0_0,100%_0,100%_100%,10px_100%)]">Progress</button>
          <button className="w-[49px] rounded-b-sm border border-t-0 border-[#c5c5c5] bg-[#eee] leading-[10px]">Information</button>
        </nav>
      </section>
    </main>
  )
}

/* Enlarged cut-out of the attribute list, laid over the viewport */
function DetailCallout() {
  return (
    <aside className="absolute top-[21px] left-[316px] h-[314px] w-[306px] overflow-hidden border-l-2 border-[#bcbcbc] bg-[#f7f7f7]">
      <div className="flex h-[278px] overflow-hidden pl-px">
        <div className="w-[281px]">
          <PropertyTable rows={detailRows} large />
        </div>
        <div className="flex w-[17px] flex-col items-center justify-between bg-[#f0f0f0] pb-[7px]">
          <div className="h-[189px] w-[15px] bg-[#a6a6a6]" />
          <svg viewBox="0 0 8 6" className="h-[6px] w-[8px]">
            <path d="M1 1l3 3 3-3" fill="none" stroke="#333" strokeWidth="2" />
          </svg>
        </div>
        <div className="flex-1 border-l border-[#ccc] bg-[#ededed]" />
      </div>
      <div className="mt-[3px] mr-[6px] ml-[2px] h-[13px] border border-[#bdbdbd] bg-[#f0f0f0]" />
      <nav className="mt-px mr-[3px] flex h-[20px] items-center border-t border-[#333] pt-[2px] text-[11px] leading-[18px] text-[#888]">
        <button className="flex h-[20px] w-[83px] items-center gap-[2px] border-r-2 border-[#333] bg-[#f0f0f0] pl-[3px] text-[#111]">
          <Icon name="grid" className="h-[16px] w-[16px]" />
          Properties
        </button>
        <button className="flex w-[78px] items-center gap-px border-r border-[#aaa] pl-[4px]">
          <Icon name="key" className="h-[17px] w-[17px]" />
          Licensing
        </button>
        <button className="w-[54px] border-r border-[#aaa]">Profiles</button>
      </nav>
    </aside>
  )
}

function Annotations() {
  return (
    <div className="pointer-events-none">
      <div className="absolute top-[143px] left-[520px] h-[25px] w-[36px] bg-[#ffff00]/40" />
      <div className="absolute top-[161px] left-[468px] h-[24px] w-[36px] bg-[#ffff00]/40" />
      <div className="absolute top-[238px] left-[351px] h-[60px] w-[256px] bg-[#ffff00]/40" />
      <div className="absolute top-[79px] left-[342px] h-[223px] w-[282px] border-4 border-[#d3003a]" />
      <div className="absolute top-[441px] left-[28px] h-[102px] w-[179px] border-4 border-[#d3003a]" />
      <div className="absolute top-[12px] left-[119px] h-[86px] w-[132px] rounded-[50%] border-4 border-[#d3003a]" />
    </div>
  )
}

export default function App() {
  return (
    <div className="relative min-h-screen bg-white pt-[20px] pr-[48px] pb-[16px] pl-[22px] font-['Open_Sans','Noto_Sans',sans-serif] text-[6px] leading-[9px]">
      <Ribbon />
      <div className="flex">
        <div className="flex w-[163px] shrink-0 flex-col">
          <ModelTree />
          <PropertiesPanel />
        </div>
        <div className="w-[2px] shrink-0 bg-[#dde8f5]" />
        <Workspace />
      </div>
      <DetailCallout />
      <Annotations />
    </div>
  )
}
